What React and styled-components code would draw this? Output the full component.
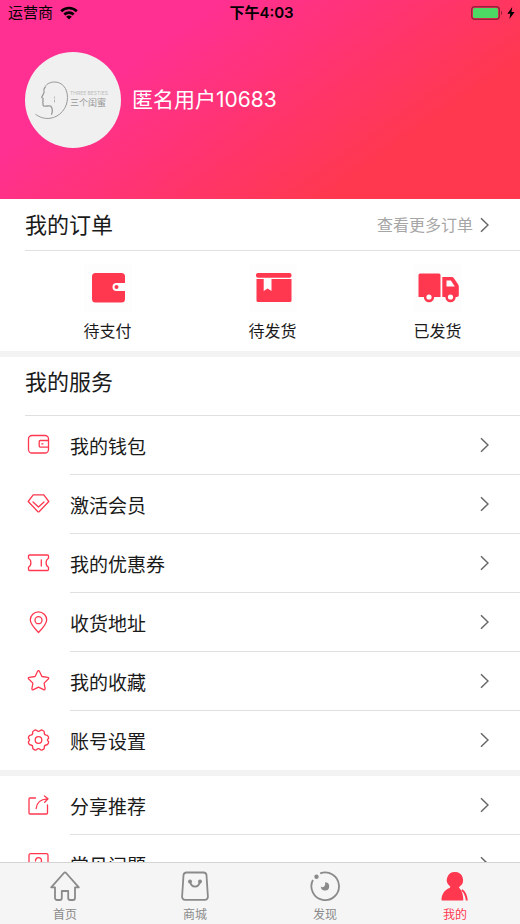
import React from 'react';
import styled, { createGlobalStyle, ThemeProvider } from 'styled-components';

const theme = {
  accent: '#ff384f',
  pink: '#ff3092',
  text: '#1a1a1a',
  muted: '#a6a6a6',
  tab: '#8a8a8a',
  line: '#e0e0e0',
  gap: '#f3f3f3',
};

const GlobalStyle = createGlobalStyle`
  * {
    box-sizing: border-box;
  }
  body {
    margin: 0;
    background: #fff;
    color: ${theme.text};
    font-family: Inter, 'Noto Sans CJK SC', sans-serif;
  }
  a {
    color: inherit;
    text-decoration: none;
  }
  h1, h2, ul {
    margin: 0;
    padding: 0;
    font-weight: 400;
    list-style: none;
  }
  svg {
    display: block;
    flex-shrink: 0;
  }
`;

const Screen = styled.div`
  display: flex;
  flex-direction: column;
  height: 100vh;
`;

const Content = styled.main`
  flex: 1;
  min-height: 0;
  overflow-y: auto;
  scrollbar-width: none;
`;

const Hero = styled.header`
  background: linear-gradient(
    145deg,
    ${({ theme }) => theme.pink} 27%,
    ${({ theme }) => theme.accent} 76%
  );
`;

const StatusBar = styled.div`
  display: grid;
  grid-template-columns: 1fr auto 1fr;
  align-items: center;
  height: 26px;
  padding: 0 5px 0 8px;
  color: #000;
  font-size: 15px;
  line-height: 20px;
`;

const StatusGroup = styled.div`
  display: flex;
  align-items: center;
  justify-content: ${({ $end }) => ($end ? 'flex-end' : 'flex-start')};
  gap: ${({ $end }) => ($end ? 4 : 7)}px;
`;

const Clock = styled.time`
  font-weight: 600;
`;

const Profile = styled.div`
  display: flex;
  align-items: center;
  gap: 11px;
  padding: 26px 25px 51px;
`;

const Avatar = styled.div`
  display: flex;
  align-items: center;
  flex-shrink: 0;
  width: 96px;
  height: 96px;
  padding-left: 9px;
  border-radius: 50%;
  background: #f0f0f0;
  color: #999;
`;

const AvatarText = styled.div`
  display: flex;
  flex-direction: column;
  white-space: nowrap;
`;

const BrandLatin = styled.span`
  color: #bbb;
  font-size: 5px;
  line-height: 6px;
`;

const BrandName = styled.span`
  font-size: 9px;
  line-height: 14px;
`;

const UserName = styled.h1`
  color: #fff;
  font-size: 21px;
  line-height: 32px;
`;

const Section = styled.section`
  & + & {
    border-top: 6px solid ${({ theme }) => theme.gap};
  }
`;

const SectionHeader = styled.div`
  display: flex;
  align-items: center;
  justify-content: space-between;
  margin-left: 25px;
  padding: ${({ $tall }) => ($tall ? '9px 31px 17px 0' : '10px 31px 9px 0')};
  border-bottom: 1px solid ${({ theme }) => theme.line};
`;

const SectionTitle = styled.h2`
  font-size: 22px;
  line-height: 32px;
`;

const MoreLink = styled.a`
  display: flex;
  align-items: center;
  gap: 7px;
  color: ${({ theme }) => theme.muted};
  font-size: 16px;
  line-height: 24px;
`;

const OrderGrid = styled.ul`
  display: grid;
  grid-template-columns: repeat(3, 1fr);
  margin-left: 25px;
  padding: 13px 0 8px;
`;

const OrderLink = styled.a`
  display: flex;
  flex-direction: column;
  align-items: center;
  gap: 7px;
  font-size: 16px;
  line-height: 24px;
`;

const ServiceLink = styled.a`
  display: grid;
  grid-template-columns: 43px 1fr;
  align-items: center;
  padding-left: 27px;
  color: ${({ theme }) => theme.accent};
`;

const ServiceBody = styled.span`
  display: flex;
  align-items: center;
  justify-content: space-between;
  height: 59px;
  padding-right: 31px;
  border-bottom: 1px solid ${({ theme }) => theme.line};
  color: ${({ theme }) => theme.text};
  font-size: 19px;
  li:last-child & {
    border-bottom-color: transparent;
  }
`;

const TabBar = styled.nav`
  display: grid;
  grid-template-columns: repeat(4, 1fr);
  border-top: 1px solid #d4d4d4;
  background: #f5f5f5;
`;

const TabLink = styled.a`
  display: flex;
  flex-direction: column;
  align-items: center;
  gap: 5px;
  padding: 7px 0 1px;
  color: ${({ theme, $active }) => ($active ? theme.accent : theme.tab)};
  font-size: 12px;
  line-height: 16px;
`;

const Chevron = () => (
  <svg width="9" height="16" viewBox="0 0 9 16" fill="none" stroke="#666" strokeWidth="1.5">
    <path d="M1 1.2 8 8l-7 6.8" />
  </svg>
);

const WifiIcon = () => (
  <svg width="18" height="14" viewBox="0 0 18 14" fill="none" stroke="#000" strokeWidth="2.6">
    <path d="M1.2 5.2a11.2 11.2 0 0 1 15.6 0" />
    <path d="M4.3 8.5a6.8 6.8 0 0 1 9.4 0" />
    <path d="M9 13.6 6.2 10.8a4 4 0 0 1 5.6 0Z" fill="#000" stroke="none" />
  </svg>
);

const BatteryIcon = () => (
  <svg width="32" height="14" viewBox="0 0 32 14">
    <rect x=".7" y=".7" width="27.6" height="12.6" rx="3" fill="none" stroke="#000" strokeOpacity=".4" strokeWidth="1.4" />
    <rect x="2" y="2" width="25" height="10" rx="1.5" fill="#4cd964" />
    <path d="M30 4.8c1.6.6 1.6 3.8 0 4.4Z" fill="#000" fillOpacity=".4" />
  </svg>
);

const BoltIcon = () => (
  <svg width="8" height="12" viewBox="0 0 8 12">
    <path d="M5.2 0 .4 6.8h2.9L2.4 12 7.6 4.9H4.5Z" fill="#000" />
  </svg>
);

const FaceLogo = () => (
  <svg width="36" height="40" viewBox="0 0 36 40" fill="none" stroke="currentColor" strokeLinecap="round">
    <path d="M1.8 34.5C6 37.5 11 39 16 38.3 26 37 33.5 28 33.5 17.5 33.5 8 28 2 20.5 2 15.5 2 11.5 4.5 11 7.5" strokeWidth="1" />
    <path d="M11 7.500c-1 1-1.800 2.300-1 3.800.8 1.600-1.800 4.200-2.300 6 0 .8 1.700.7 1.500 1.600-.2.800-.9 1-.2 1.700.7.700-.7 1.100-.2 2 .8 1.100-.4 2.600.8 3.200 2 .7 5.200-.3 7.200.4 1.400 2 2.200 5 .8 8" strokeWidth="1.300" />
    <path d="M20.500 17v1M20.500 20v2" strokeWidth=".7" />
  </svg>
);

const orderIcons = {
  pay: (
    <>
      <path d="M11.500 9h26a3.500 3.500 0 0 1 3.500 3.500V19H32.500a4 4 0 0 0 0 8H41v8a3.500 3.500 0 0 1-3.500 3.500h-26A3.500 3.500 0 0 1 8 35V12.500A3.500 3.500 0 0 1 11.500 9Z" />
      <circle cx="32.500" cy="23" r="2" />
    </>
  ),
  pack: (
    <>
      <rect x="7" y="9" width="35.500" height="4.800" rx="2" />
      <path d="M7.500 15h7.200v12l3.900-2.400 3.900 2.400V15h20v21.500a1.500 1.500 0 0 1-1.500 1.500H9a1.500 1.500 0 0 1-1.500-1.500Z" />
    </>
  ),
  ship: (
    <>
      <path d="M6 9.500h19a1.500 1.500 0 0 1 1.500 1.500v22H4.500V11A1.500 1.500 0 0 1 6 9.500Z" />
      <path
        fillRule="evenodd"
        d="M28.300 13h9.400c1 0 1.500.3 2 1l4.300 6.300c.6.900.8 1.500.8 2.500V31a2 2 0 0 1-2 2H28.300Zm4.200 3.500v6h8.300l-3.900-6Z"
      />
      <circle cx="15" cy="33" r="5.200" />
      <circle cx="36.500" cy="33" r="5.200" />
      <circle cx="15" cy="33" r="2.600" fill="#fff" />
      <circle cx="36.500" cy="33" r="2.600" fill="#fff" />
    </>
  ),
};

const OrderIcon = styled(({ name, className }) => (
  <svg className={className} width="48" height="48" viewBox="0 0 48 48" fill="currentColor">
    {orderIcons[name]}
  </svg>
))`
  color: ${({ theme }) => theme.accent};
  background: #fdfdfd;
`;

const serviceIcons = {
  wallet: (
    <>
      <rect x="1.500" y="1.500" width="20" height="17.500" rx="3.500" />
      <path d="M21.500 6.500h-8.300a1 1 0 0 0-1 1v4.600a1 1 0 0 0 1 1h8.300" />
      <path d="M14.800 9.800h1.200" />
    </>
  ),
  member: (
    <>
      <path d="M6.200 1.800h10.600l5 6.700-9.500 10a1.200 1.200 0 0 1-1.600 0l-9.500-10Z" />
      <path d="m6 9 5.500 5 5.500-5" />
    </>
  ),
  coupon: (
    <>
      <path d="M2.500 3h18a1 1 0 0 1 1 1v2.200c-3.200 1.800-3.200 7.300 0 9v2.300a1 1 0 0 1-1 1h-18a1 1 0 0 1-1-1v-2.300c3.200-1.700 3.200-7.200 0-9V4a1 1 0 0 1 1-1Z" />
      <path d="M14.300 7.800v6.200" />
    </>
  ),
  address: (
    <>
      <path d="M11.500 21.500C7 16.800 3.300 13 3.300 9a8.200 8.200 0 0 1 16.400 0c0 4-3.700 7.800-8.200 12.500Z" />
      <circle cx="11.500" cy="9.200" r="3.500" />
    </>
  ),
  favorite: (
    <path d="M10.600 1.300a1 1 0 0 1 1.800 0l2.500 5.200 5.900.8c.9.100 1.200 1.100.5 1.700l-4.200 4.100 1 5.500c.1 1-.7 1.500-1.500 1.100l-5.100-2.500-5.100 2.500c-.8.400-1.600-.1-1.500-1.100l1-5.500L1.700 9c-.7-.6-.4-1.600.5-1.700l5.900-.8Z" />
  ),
  settings: (
    <>
      <path d="M7.700 1.200c1-.5 1.500-.1 2 .4 1 .9 2.600.9 3.600 0 .5-.5 1-.9 2-.4l1.300.8c1 .6.700 1.300.7 2 0 1.300.7 2 2 2.100.9 0 1.300.3 1.700 1.100.7 1.200 1 1.900.2 2.600-1 .9-1 1.600 0 2.500.8.700.5 1.400-.2 2.600-.4.800-.8 1.100-1.700 1.100-1.300.1-2 .8-2 2.100 0 .7.300 1.400-.7 2l-1.300.8c-1 .5-1.500.1-2-.4-1-.9-2.600-.9-3.600 0-.5.500-1 .9-2 .4l-1.300-.8c-1-.6-.7-1.300-.7-2 0-1.300-.7-2-2-2.100-.9 0-1.300-.3-1.700-1.100-.7-1.200-1-1.900-.2-2.600 1-.9 1-1.600 0-2.500-.8-.7-.5-1.400.2-2.600.4-.8.800-1.100 1.700-1.100 1.300-.1 2-.8 2-2.100 0-.7-.3-1.400.7-2Z" />
      <circle cx="11.500" cy="11" r="3.300" />
    </>
  ),
  share: (
    <>
      <path d="M8.500 4H3a1 1 0 0 0-1 1v14a1 1 0 0 0 1 1h16.500a1 1 0 0 0 1-1v-8" />
      <path d="M9.200 14.500C9.500 9 13 5.300 20.500 4.800M17.500 2l3.500 2.800-3.300 3.500" />
    </>
  ),
  help: (
    <>
      <rect x="2" y=".7" width="19" height="19" rx="1.500" />
      <path d="M8.500 8c0-4.500 6-4.500 6 0 0 2.300-3 2.300-3 5M11.500 15v1" />
    </>
  ),
};

const ServiceIcon = ({ name }) => (
  <svg
    width="24"
    height="24"
    viewBox="0 0 24 24"
    fill="none"
    stroke="currentColor"
    strokeWidth="1.300"
    strokeLinecap="round"
    strokeLinejoin="round"
  >
    {serviceIcons[name]}
  </svg>
);

const tabIcons = {
  home: (
    <path d="M2.200 17.300 14.900 3a1.500 1.500 0 0 1 2.200 0l12.700 14.300H26V28a2 2 0 0 1-2 2h-2.800a2 2 0 0 1-2-2v-7h-6.400v7a2 2 0 0 1-2 2H8a2 2 0 0 1-2-2V17.300Z" />
  ),
  mall: (
    <>
      <path d="M7.500 2.500h17a3 3 0 0 1 3 2.700l1.400 21.300a3 3 0 0 1-3 3.300H6.100a3 3 0 0 1-3-3.300L4.500 5.200a3 3 0 0 1 3-2.700Z" />
      <path d="M11 11.500c1.200 6.700 8.800 6.700 10 0" />
      <g fill="currentColor" stroke="none">
        <circle cx="11" cy="11.500" r="2" />
        <circle cx="21" cy="11.500" r="2" />
      </g>
    </>
  ),
  discover: (
    <>
      <path d="M11.200 3.400A13.800 13.800 0 1 1 3.900 10" />
      <g fill="currentColor" stroke="none">
        <circle cx="7.500" cy="6.800" r="2.200" />
        <path d="M16 12.200a4.200 4.200 0 1 1-4.200 4.400c1 .8 2.400.8 3.300 0 .9-.9 1.500-2.400.9-4.400Z" />
      </g>
    </>
  ),
  me: (
    <>
      <path
        fill="currentColor"
        stroke="none"
        d="M16 2a8 8 0 0 1 4.700 14.500c-.8.600-.9 1.200-.2 1.800 2.700 2.700 3.700 7 3.800 11.200 0 .7-.3 1-1 1H3.500c-.7 0-1-.3-1-1 .3-5 2.700-9.200 7.500-11.200 1.300-.5 1.700-1.200.9-2A8 8 0 0 1 16 2Z"
      />
      <path d="M22.800 20c2.700 1.800 4.500 5.500 5 10.500" strokeWidth="2" />
    </>
  ),
};

const TabIcon = ({ name }) => (
  <svg width="32" height="32" viewBox="0 0 32 32" fill="none" stroke="currentColor" strokeWidth="1.800" strokeLinejoin="round">
    {tabIcons[name]}
  </svg>
);

const orders = [
  { icon: 'pay', label: '待支付' },
  { icon: 'pack', label: '待发货' },
  { icon: 'ship', label: '已发货' },
];

const services = [
  { icon: 'wallet', label: '我的钱包' },
  { icon: 'member', label: '激活会员' },
  { icon: 'coupon', label: '我的优惠券' },
  { icon: 'address', label: '收货地址' },
  { icon: 'favorite', label: '我的收藏' },
  { icon: 'settings', label: '账号设置' },
];

const extras = [
  { icon: 'share', label: '分享推荐' },
  { icon: 'help', label: '常见问题' },
];

const tabs = [
  { icon: 'home', label: '首页' },
  { icon: 'mall', label: '商城' },
  { icon: 'discover', label: '发现' },
  { icon: 'me', label: '我的', active: true },
];

const ServiceList = ({ items }) => (
  <ul>
    {items.map(({ icon, label }) => (
      <li key={icon}>
        <ServiceLink href={`#${icon}`}>
          <ServiceIcon name={icon} />
          <ServiceBody>
            {label}
            <Chevron />
          </ServiceBody>
        </ServiceLink>
      </li>
    ))}
  </ul>
);

const App = () => {
  return (
    <ThemeProvider theme={theme}>
      <GlobalStyle />
      <Screen>
        <Content>
          <Hero>
            <StatusBar>
              <StatusGroup>
                运营商
                <WifiIcon />
              </StatusGroup>
              <Clock>下午4:03</Clock>
              <StatusGroup $end>
                <BatteryIcon />
                <BoltIcon />
              </StatusGroup>
            </StatusBar>
            <Profile>
              <Avatar>
                <FaceLogo />
                <AvatarText>
                  <BrandLatin>THREE BESTIES</BrandLatin>
                  <BrandName>三个闺蜜</BrandName>
                </AvatarText>
              </Avatar>
              <UserName>匿名用户10683</UserName>
            </Profile>
          </Hero>

          <Section>
            <SectionHeader>
              <SectionTitle>我的订单</SectionTitle>
              <MoreLink href="#orders">
                查看更多订单
                <Chevron />
              </MoreLink>
            </SectionHeader>
            <OrderGrid>
              {orders.map(({ icon, label }) => (
                <li key={icon}>
                  <OrderLink href={`#${icon}`}>
                    <OrderIcon name={icon} />
                    {label}
                  </OrderLink>
                </li>
              ))}
            </OrderGrid>
          </Section>

          <Section>
            <SectionHeader $tall>
              <SectionTitle>我的服务</SectionTitle>
            </SectionHeader>
            <ServiceList items={services} />
          </Section>

          <Section>
            <ServiceList items={extras} />
          </Section>
        </Content>

        <TabBar>
          {tabs.map(({ icon, label, active }) => (
            <TabLink key={icon} href={`#${icon}`} $active={active}>
              <TabIcon name={icon} />
              {label}
            </TabLink>
          ))}
        </TabBar>
      </Screen>
    </ThemeProvider>
  );
};

export default App;
